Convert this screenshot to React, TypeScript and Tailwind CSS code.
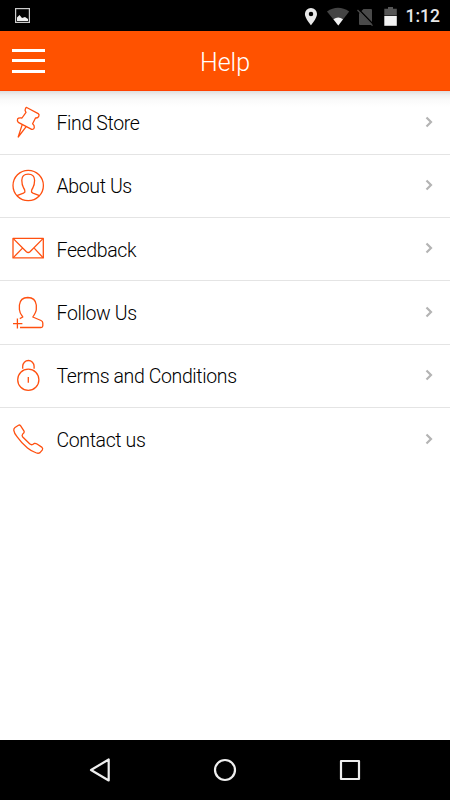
import type { ReactNode } from "react";

const menuItems: { label: string; icon: ReactNode }[] = [
  {
    label: "Find Store",
    icon: (
      <>
        <path d="M16.7 2.5 28.2 8.6Q29.6 9.6 28.8 11.2Q28 13.2 25.5 13L22.6 18.8Q24.6 20.4 24.3 22.3Q23.8 24.9 21.7 24.3L8.3 17.3Q6.9 15.6 7.6 13.9Q8.7 12.3 12 13L16 7.3Q14.6 5.4 15.3 3.9Q15.9 2.3 16.7 2.5Z" />
        <path d="M12.2 19.6 8.2 32 16.2 21.7" />
      </>
    ),
  },
  {
    label: "About Us",
    icon: (
      <>
        <circle cx="18.2" cy="17.5" r="15.2" />
        <path d="M6.9 27.7 13.5 25.2Q15.4 24.4 14.9 22.9Q14.6 21.4 13.6 20Q11.8 16.5 11.8 12.2Q12 6.2 18.2 6.2T24.6 12.2Q24.6 16.5 22.8 20Q21.8 21.4 21.5 22.9Q21 24.4 22.9 25.2L29.5 27.7" />
      </>
    ),
  },
  {
    label: "Feedback",
    icon: (
      <>
        <path d="M3 7.4H33.3V26.9H3Z" />
        <path d="M3.3 7.6 16.4 20.7Q18.2 22.4 20 20.7L33 7.6M3.3 26.6 12.3 17.4M33 26.6 24.4 17.4" />
      </>
    ),
  },
  {
    label: "Follow Us",
    icon: (
      <>
        <path d="M9.8 23.6 12.8 22Q9.5 18 9.4 14.5V10Q10.3 2.6 17.8 2.5Q25.4 2.6 26.3 10V14.5Q26.2 17 22.8 22L31 25.5Q32.8 26.4 32.8 28V31Q32.7 32.4 31 32.5H10" />
        <path d="M7.4 23.4V33.4M3 28.6H12.4" />
      </>
    ),
  },
  {
    label: "Terms and Conditions",
    icon: (
      <>
        <circle cx="18.3" cy="21.8" r="10.6" />
        <path d="M12.7 10.8V8.2A5.7 5.7 0 0 1 24.1 8.2V10.8M18.3 19V24.8" />
      </>
    ),
  },
  {
    label: "Contact us",
    icon: (
      <path d="M8.5 3.2Q9.6 2.6 10.5 3.7L14.2 9.3Q14.5 10.7 12.7 12.1Q11.6 13.5 12.5 14.7L19.6 21.8Q21.2 23.2 22.7 22.5L24.4 21.4Q25.6 21.1 27 22L31.7 25.1Q33.2 26.3 32.4 27.8L30 30.6Q28.6 31.6 26.5 31Q21.4 29.3 17.5 26Q11 20.5 7 14.7Q4.2 11.1 3.8 8.3Q3.6 6.5 5 5.5Z" />
    ),
  },
];

function StatusBar() {
  return (
    <div className="h-[31px] shrink-0 bg-black flex items-center justify-between pl-[15px] pr-[10px]">
      <svg className="w-[15px] h-[15px]" viewBox="0 0 15 15" fill="none">
        <rect x=".6" y=".6" width="13.8" height="13.8" stroke="#ccc" strokeWidth="1.2" />
        <path d="M2 13V9.5L4.5 7 7 10 10 9 13 11V13Z" fill="#eee" />
      </svg>
      <div className="flex items-center">
        <svg className="w-[94px] h-[20px]" viewBox="304 5 94 20">
          <path
            d="M311 7A6 6 0 0 0 304.9 13C304.9 17.4 311 24.2 311 24.2S317 17.4 317 13A6 6 0 0 0 311 7ZM311 10.7A2.2 2.2 0 1 1 311 15.2A2.2 2.2 0 0 1 311 10.7Z"
            fill="#e8e8e8"
            fillRule="evenodd"
          />
          <path d="M327 10.5Q338 3 349.2 10.5L338.3 24.5Z" fill="#444" />
          <path d="M333.4 18.2Q338.3 15 343 18.2L338.3 24.5Z" fill="#f2f2f2" />
          <path d="M363.5 8H371Q372 8 372 9V23Q372 24 371 24H360Q359 24 359 23V12.5Z" fill="#4a4a4a" />
          <path d="M358.7 8.2 373.7 23.8" stroke="#000" strokeWidth="1.3" />
          <path d="M357.5 9 372.5 24.6" stroke="#4a4a4a" strokeWidth="1.3" />
          <path d="M388 6H393V7.7H396.8V14.5H384.3V7.7H388Z" fill="#555" />
          <path d="M384.3 15H396.8V24.8H384.3Z" fill="#f2f2f2" />
        </svg>
        <span className="ml-2 mt-px text-[17.5px] leading-5 font-medium text-[#e8e8e8]">1:12</span>
      </div>
    </div>
  );
}

function Header() {
  return (
    <header className="h-[60px] shrink-0 bg-[#ff5200] border-b border-[#ff4200] grid grid-cols-3 items-center px-3">
      <button className="w-[33px] flex flex-col gap-[7.5px]" aria-label="Menu">
        <span className="h-[3px] w-full bg-white" />
        <span className="h-[3px] w-full bg-white" />
        <span className="h-[3px] w-full bg-white" />
      </button>
      <h1 className="pt-1 text-center text-[25px] leading-8 font-light text-white">Help</h1>
    </header>
  );
}

function NavBar() {
  return (
    <nav className="h-[60px] shrink-0 bg-black flex items-center justify-between px-[88px]">
      <svg className="w-6 h-6" viewBox="0 0 24 24" fill="none" stroke="#eee" strokeWidth="2.2" strokeLinejoin="round">
        <path d="M20.7 1.5V22.5L3 12Z" />
      </svg>
      <svg className="w-6 h-6" viewBox="0 0 24 24" fill="none" stroke="#eee" strokeWidth="2.2">
        <circle cx="12" cy="12" r="10" />
      </svg>
      <svg className="w-6 h-6" viewBox="0 0 24 24" fill="none" stroke="#eee" strokeWidth="2.2" strokeLinejoin="round">
        <rect x="3" y="3" width="18" height="18" />
      </svg>
    </nav>
  );
}

export default function App() {
  return (
    <div className="w-[450px] h-[800px] flex flex-col bg-white overflow-hidden font-[Roboto,sans-serif]">
      <StatusBar />
      <Header />
      <main className="flex-1 pt-[0.6px] bg-[linear-gradient(to_bottom,#dedede_0px,#f0f0f0_4px,#fafafa_9px,#ffffff_16px)]">
        <ul>
          {menuItems.map(({ label, icon }) => (
            <li
              key={label}
              className="h-[63.3px] flex items-center pl-[10px] pr-[17px] border-b border-[#e4e4e4] last:border-b-0"
            >
              <svg
                className="w-9 h-9 shrink-0"
                viewBox="0 0 36 36"
                fill="none"
                stroke="#ff5010"
                strokeWidth="1.3"
                strokeLinejoin="round"
              >
                {icon}
              </svg>
              <span className="ml-[10.5px] pt-[2.4px] flex-1 text-[19.5px] leading-6 tracking-[-0.38px] font-light text-black">
                {label}
              </span>
              <svg className="w-2 h-3 -mt-0.5" viewBox="0 0 8 12" fill="none" stroke="#b4b4b4" strokeWidth="2.2">
                <path d="M1.5 1.5 6 6 1.5 10.5" />
              </svg>
            </li>
          ))}
        </ul>
      </main>
      <NavBar />
    </div>
  );
}
